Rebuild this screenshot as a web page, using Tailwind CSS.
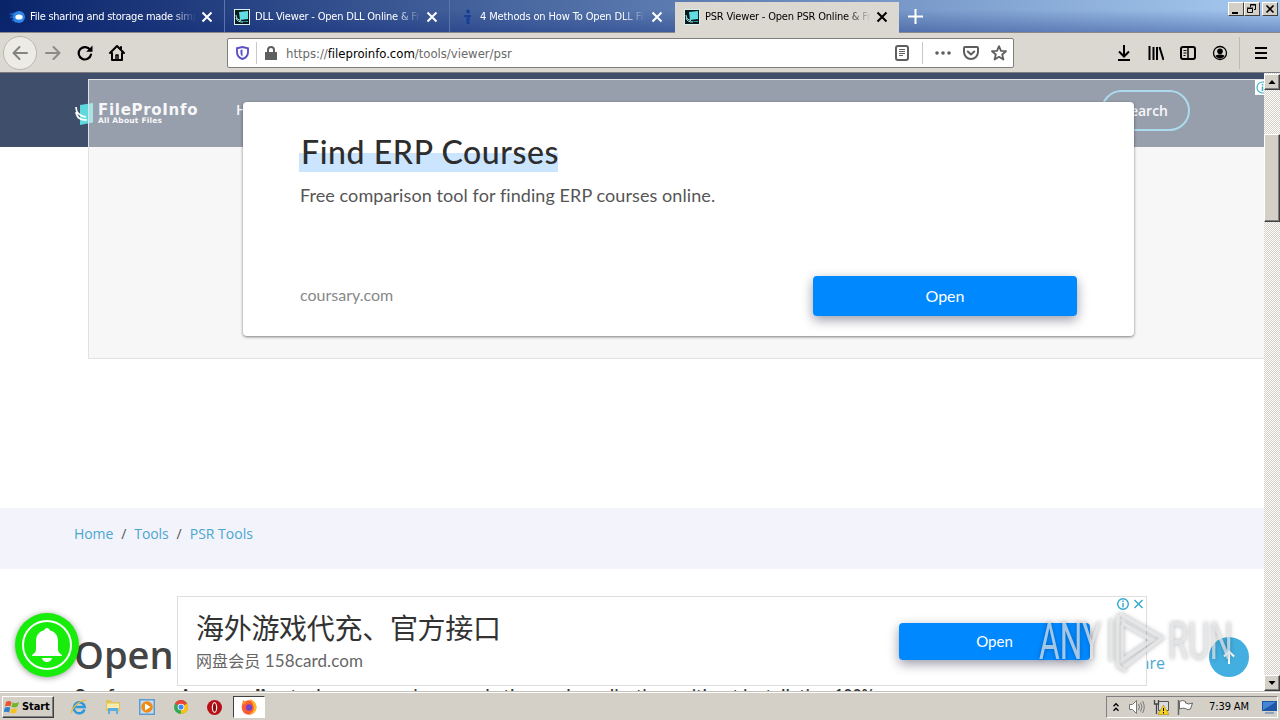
<!DOCTYPE html>
<html lang="en">
<head>
  <meta charset="UTF-8">
  <title>PSR Viewer - Open PSR Online &amp; Free</title>
  <meta name="viewport" content="width=device-width, initial-scale=1">
  <script src="https://cdn.jsdelivr.net/npm/@tailwindcss/browser@4"></script>
</head>

<body class="w-[1280px] h-[720px] overflow-hidden flex flex-col bg-white font-['DejaVu_Sans_Condensed','DejaVu_Sans',sans-serif] text-black">

  <svg class="hidden">
    <symbol id="close" viewBox="0 0 12 12"><path d="M1.500 1.500l9 9M10.500 1.500l-9 9" fill="none" stroke="currentColor" stroke-width="2"/></symbol>
    <symbol id="fpi" viewBox="0 0 16 16">
      <path d="M0 0h16v16H0z" fill="#d8f0f0"/><path d="M1 1h14v14H1z" fill="#0a1a1c"/>
      <path d="M5 3l9-1v8l-8 1z" fill="#62dbe2"/><path d="M2 6c0 3 2 5 5 5.500M2 9c1 3 3 4 7 4" fill="none" stroke="#a4f3f3" stroke-width="1"/>
      <path d="M8 12.500l6-.6V13H8z" fill="#37b6c0"/>
    </symbol>
  </svg>

  <!-- tab strip -->
  <header class="h-[33px] shrink-0 flex justify-between border-b border-[#8a8a8a] bg-[linear-gradient(to_bottom,transparent_30%,rgba(10,36,120,0.35)),linear-gradient(to_right,#0a246a,#a6caf0)]">
    <div class="flex text-white text-[11px]">
      <div class="w-[225px] h-8 flex items-center pt-[2px] pl-2 border-r border-[#5c74a8]">
        <svg class="size-[18px] shrink-0" viewBox="0 0 18 18"><path d="M1 6l7-2v11L3 12l3-1-5-2 4-1z" fill="#1761c0"/><circle cx="11" cy="9" r="6" fill="#2f86e8"/><ellipse cx="11" cy="9" rx="3.600" ry="2.600" fill="#fff"/></svg>
        <span class="ml-1 mt-px w-[166px] overflow-hidden whitespace-nowrap tracking-[-0.25px] mask-r-from-85%">File sharing and storage made simple</span>
        <svg class="size-3 ml-[5px] shrink-0"><use href="#close"/></svg>
      </div>
      <div class="w-[225px] h-8 flex items-center pt-[2px] pl-[9px] border-r border-[#5c74a8]">
        <svg class="size-4 shrink-0"><use href="#fpi"/></svg>
        <span class="ml-[5px] mt-px w-[166px] overflow-hidden whitespace-nowrap tracking-[-0.2px] mask-r-from-85%">DLL Viewer - Open DLL Online &amp; Free</span>
        <svg class="size-3 ml-[5px] shrink-0"><use href="#close"/></svg>
      </div>
      <div class="w-[225px] h-8 flex items-center pt-[2px] pl-[9px]">
        <svg class="size-4 shrink-0" viewBox="0 0 16 16"><circle cx="9" cy="2.500" r="2" fill="#173f93"/><path d="M5 6h7v2h-1.500v7h-3V8H5z" fill="#173f93"/></svg>
        <span class="ml-[5px] mt-px w-[166px] overflow-hidden whitespace-nowrap tracking-[-0.14px] mask-r-from-85%">4 Methods on How To Open DLL Files</span>
        <svg class="size-3 ml-[5px] shrink-0"><use href="#close"/></svg>
      </div>
      <div class="w-[224px] h-[31px] flex items-center pl-[9px] mt-0.5 pb-px bg-[#dbd8d1] text-black">
        <svg class="size-4 shrink-0"><use href="#fpi"/></svg>
        <span class="ml-[5px] mt-px w-[166px] overflow-hidden whitespace-nowrap tracking-[-0.2px] mask-r-from-85%">PSR Viewer - Open PSR Online &amp; Free</span>
        <svg class="size-3 ml-[5px] shrink-0"><use href="#close"/></svg>
      </div>
      <svg class="size-[15px] mt-[9px] ml-[9px]" viewBox="0 0 15 15"><path d="M7.500 0v15M0 7.500h15" stroke="#fff" stroke-width="2"/></svg>
    </div>
    <div class="flex mt-0.5 mr-0.5">
      <div class="w-4 h-[14px] bg-[#d4d0c8] border border-t-white border-l-white border-r-[#404040] border-b-[#404040]"><svg viewBox="0 0 14 12"><path d="M3 9h6v2H3z"/></svg></div>
      <div class="w-4 h-[14px] bg-[#d4d0c8] border border-t-white border-l-white border-r-[#404040] border-b-[#404040]"><svg viewBox="0 0 14 12" fill="none" stroke="#000"><path d="M5.500 4V1.500h5v5H9M5 2h6M2.500 5.500h5v4h-5zM2 5h6"/></svg></div>
      <div class="w-4 h-[14px] ml-0.5 bg-[#d4d0c8] border border-t-white border-l-white border-r-[#404040] border-b-[#404040]"><svg viewBox="0 0 14 12"><path d="M3.500 2.500l7 7M10.500 2.500l-7 7" stroke="#000" stroke-width="1.600"/></svg></div>
    </div>
  </header>

  <!-- toolbar -->
  <nav class="h-10 shrink-0 flex items-center bg-[#dbd8d1] border-b border-[#7c7c80]">
    <div class="size-[34px] ml-[3px] rounded-full bg-[#edebe6] border border-[#bab7b0] flex items-center justify-center text-[#858380]">
      <svg class="size-4" viewBox="0 0 16 16" fill="none" stroke="currentColor" stroke-width="2" stroke-linecap="round" stroke-linejoin="round"><path d="M15 8H1.500M7.500 2l-6 6 6 6"/></svg>
    </div>
    <svg class="size-4 ml-2 text-[#8c8a86]" viewBox="0 0 16 16" fill="none" stroke="currentColor" stroke-width="2" stroke-linecap="round" stroke-linejoin="round"><path d="M1 8h13.500M8.500 2l6 6-6 6"/></svg>
    <svg class="size-4 ml-4" viewBox="0 0 16 16"><path d="M13.200 5A6.200 6.200 0 1 0 14 9.500" fill="none" stroke="#000" stroke-width="2.200" stroke-linecap="round"/><path d="M15.500.5v6.300H9.200z"/></svg>
    <svg class="size-4 ml-4" viewBox="0 0 16 16" fill="none" stroke="#000" stroke-width="2" stroke-linejoin="round" stroke-linecap="round"><path d="M1 8l7-7 7 7M3 8v7h10V8M12 2v2"/><path d="M7 10h2v5H7z" stroke-width="1.500"/></svg>

    <div class="w-[787px] h-[30px] ml-[102px] flex items-center bg-white border border-[#807e79] rounded-[2px] text-[#6a6a6a]">
      <svg class="w-[13px] h-[14px] ml-2" viewBox="0 0 13 14"><path d="M1 2.200L6.500 1 12 2.200V6c0 4-2.500 6-5.500 7C3.500 12 1 10 1 6z" fill="none" stroke="#5b50c8" stroke-width="1.900"/><path d="M6.500 3.500L4.500 4v2.500c0 2 .5 3.300 2 4z" fill="#5b50c8"/></svg>
      <div class="w-px h-[22px] ml-[7px] bg-[#c8c8c8]"></div>
      <svg class="w-3 h-[14px] ml-2" viewBox="0 0 12 14"><path d="M0 6h12v8H0z" fill="#5e5e5e"/><path d="M3 7V4a3 3 0 0 1 6 0v3" fill="none" stroke="#5e5e5e" stroke-width="2"/></svg>
      <span class="ml-[9px] mt-0.5 text-[13px] tracking-[-0.02px] whitespace-nowrap">https://<span class="text-black">fileproinfo.com</span>/tools/viewer/psr</span>
      <div class="ml-auto flex items-center mr-[6px]">
        <svg class="w-[14px] h-4" viewBox="0 0 14 16"><rect x="1" y="1" width="12" height="14" rx="2" fill="none" stroke="#5e5e5e" stroke-width="2"/><path d="M4 4.500h6M4 6.500h6M4 8.500h6M4 10.500h4" stroke="#5e5e5e"/></svg>
        <div class="w-px h-[22px] ml-[13px] bg-[#c8c8c8]"></div>
        <svg class="w-4 h-4 ml-3" viewBox="0 0 16 16" fill="#5e5e5e"><circle cx="2" cy="8" r="1.800"/><circle cx="8" cy="8" r="1.800"/><circle cx="14" cy="8" r="1.800"/></svg>
        <svg class="w-4 h-4 ml-3" viewBox="0 0 16 16" fill="none" stroke="#5e5e5e" stroke-width="2" stroke-linecap="round" stroke-linejoin="round"><path d="M2 2h12q1 0 1 1v4a7 7 0 0 1-14 0V3q0-1 1-1z"/><path d="M4.800 6.500L8 9.500l3.200-3"/></svg>
        <svg class="w-4 h-4 ml-3" viewBox="0 0 16 16" fill="none" stroke="#5e5e5e" stroke-width="1.800" stroke-linejoin="round"><path d="M8 1.200l2 4.600 5 .4-3.800 3.300L12.400 14.500 8 11.800l-4.400 2.700 1.200-5L1 6.200l5-.4z"/></svg>
      </div>
    </div>

    <svg class="size-4 ml-[102px]" viewBox="0 0 16 16" fill="none" stroke="#000" stroke-width="2"><path d="M8 0v11M3 6.500l5 5 5-5M2 15h12"/></svg>
    <svg class="size-4 ml-4" viewBox="0 0 16 16" fill="none" stroke="#000" stroke-width="2"><path d="M1.500 1v14M5.500 2v13M9 2v13M11.500 2l4 13"/></svg>
    <svg class="size-4 ml-4" viewBox="0 0 16 16" fill="none" stroke="#000" stroke-width="2"><rect x="1" y="2" width="14" height="12" rx="2"/><path d="M8 2v12" stroke-width="1.500"/><path d="M3.500 5.500h3M3.500 8h3M3.500 10.500h2" stroke-width="1"/></svg>
    <svg class="size-4 ml-4" viewBox="0 0 16 16"><circle cx="8" cy="8" r="6.500" fill="none" stroke="#000" stroke-width="1.300"/><circle cx="8" cy="6.200" r="2.800"/><path d="M3.500 11c1-2 8-2 9 0-2 3.200-7 3.200-9 0z"/></svg>
    <div class="w-px h-8 ml-[11px] bg-[#bdbab4]"></div>
    <svg class="w-3 h-3 ml-[15px]" viewBox="0 0 12 12"><path d="M0 1h12M0 6h12M0 11h12" stroke="#000" stroke-width="2"/></svg>
  </nav>

  <div class="h-[618px] shrink-0 flex">
    <!-- page -->
    <main class="relative w-[1264px] h-full overflow-hidden bg-white font-['Open_Sans',sans-serif]">
      <div class="h-[74px] flex items-center pl-[75px] bg-[#3f4e6b] text-white">
        <svg class="w-[19px] h-[22px] mt-[7px]" viewBox="0 0 19 22"><path d="M5 2l13-2v19.500L5 22z" fill="#5fd9de"/><path d="M1 4c0 6 3 9 10 10M1 9c1 6 4 8 11 8" fill="none" stroke="#fff" stroke-width="1.700"/></svg>
        <div class="ml-1 mt-[7px] w-[100px] whitespace-nowrap font-['DejaVu_Sans',sans-serif]">
          <p class="text-[15px] leading-[14px] font-bold tracking-[0.7px]">FileProInfo</p>
          <p class="text-[7.5px] leading-[8px] font-bold tracking-[0.2px]">All About Files</p>
        </div>
        <span class="ml-[38px] text-sm font-semibold">Home</span>
        <span class="ml-auto mr-[74px] w-[89px] h-[41px] mt-px pr-[20px] flex items-center justify-end rounded-full border-2 border-[#69c6ea] text-sm font-semibold">Search</span>
      </div>

      <div class="h-[61px] mt-[361px] pt-4 pl-[74px] bg-[#f2f3fb] text-sm text-[#4aa7d0] leading-5">
        <a class="tracking-[-0.1px]">Home</a><span class="mx-2 text-[#555]">/</span><a class="tracking-[-0.1px]">Tools</a><span class="mx-2 text-[#555]">/</span><a>PSR Tools</a>
      </div>

      <div class="mt-[59px] px-[74px] flex justify-between">
        <h1 class="text-[38px] leading-[54px] font-semibold text-[#444] -mt-px">Open</h1>
        <a class="mt-[23px] mr-[25px] text-base text-[#4aa7d0] leading-6">Share</a>
      </div>
      <p class="mt-[2px] pl-[74px] text-base font-semibold text-[#333] whitespace-nowrap">Our free <b>psr viewer online</b> tool opens psr viewer and other such applications without installation 100%</p>

      <!-- top ad -->
      <aside class="absolute top-[6px] left-[88px] w-[1177px] h-[280px] flex justify-center bg-[#f0f0f0]/50 border border-[#dfe3e8] font-['Lato',sans-serif]">
        <div class="w-[891px] h-[234px] mt-[22px] ml-6 px-[57px] rounded bg-white shadow-[0_1px_3px_rgba(0,0,0,0.5)] flex flex-col">
          <div class="mt-[32px] -ml-px"><span class="inline-block w-[259px] h-[38px] pl-0.5 leading-[36px] text-[32px] font-medium tracking-[0.6px] whitespace-nowrap text-[#2d2d2d] bg-linear-to-b from-transparent from-50% to-[#cce5ff] to-50%">Find ERP Courses</span></div>
          <p class="mt-[11px] text-[18px] leading-6 tracking-[0.08px] text-[#555]">Free comparison tool for finding ERP courses online.</p>
          <div class="mt-[69px] flex items-center justify-between">
            <span class="-mt-0.5 text-base text-[#888]">coursary.com</span>
            <div class="w-[264px] h-10 rounded bg-[#0088ff] text-white text-base flex items-center justify-center shadow-[0_4px_12px_rgba(0,0,40,0.4)]">Open</div>
          </div>
        </div>
        <div class="absolute top-0 right-0 w-[9px] h-[15px] overflow-hidden bg-white"><svg class="size-[15px]" viewBox="0 0 15 15"><circle cx="7.500" cy="7.500" r="5.500" fill="none" stroke="#3bb4cb" stroke-width="1.200"/><path d="M7.500 4v1.500M7.500 6.500V11" stroke="#3bb4cb" stroke-width="1.500"/></svg></div>
      </aside>

      <!-- bottom ad -->
      <aside class="absolute top-[523px] left-[177px] w-[970px] h-[90px] pl-[18px] pr-14 flex justify-between items-center bg-white border border-[#dedede] font-['Lato','Noto_Sans_CJK_SC',sans-serif]">
        <div>
          <p class="text-[28px] leading-9 text-[#333] tracking-[-0.3px] font-['Noto_Sans_CJK_SC',sans-serif]">海外游戏代充、官方接口</p>
          <p class="mt-[3px] text-[17px] leading-6 text-[#666] tracking-[0.1px]"><span class="text-[16px] font-['Noto_Sans_CJK_SC',sans-serif]">网盘会员</span> 158card.com</p>
        </div>
        <div class="w-[191px] h-[37px] mt-[1px] rounded bg-[#0088ff] text-white text-[15px] flex items-center justify-center shadow-[0_4px_12px_rgba(0,0,40,0.4)]">Open</div>
        <svg class="absolute top-[1px] right-[1px] w-7 h-3" viewBox="0 0 28 12" fill="none" stroke="#2fa7cc" stroke-width="1.400"><circle cx="6" cy="6" r="5.300"/><path d="M6 2.500V4M6 5v4.500M17.500 2l8 8M25.500 2l-8 8"/></svg>
      </aside>

      <div class="absolute left-[15px] top-[540px] size-16 rounded-full bg-[#17ec0a] shadow-[0_1px_6px_rgba(0,0,0,0.4)]">
        <svg viewBox="0 0 64 64"><circle cx="32" cy="32" r="24" fill="none" stroke="#fff" stroke-width="2"/><path d="M32 15c1.600 0 2.500 1 2.700 2.200C40.500 18.500 43 23 43 28v8c0 3 1.500 4 4 6v1H17v-1c2.500-2 4-3 4-6v-8c0-5 2.500-9.500 8.300-10.800C29.500 16 30.400 15 32 15zM27 45h10c-.5 2.500-2.500 4-5 4s-4.500-1.500-5-4z" fill="#fff"/></svg>
      </div>
      <div class="absolute left-[1209px] top-[564px] size-10 rounded-full bg-[#42afe0]">
        <svg viewBox="0 0 40 40"><path d="M20 27V15M15 19.500l5-5 5 5" fill="none" stroke="#fff" stroke-width="2"/></svg>
      </div>

      <!-- watermark -->
      <svg class="absolute left-[1030px] top-[527px] w-[230px] h-[85px] font-['Roboto',sans-serif] drop-shadow-[0_0_2px_rgba(0,0,0,0.4)]" viewBox="0 0 230 85">
        <g fill="#e9ebee" fill-opacity=".7" font-size="51">
          <text x="9" y="59" textLength="62" lengthAdjust="spacingAndGlyphs">ANY</text>
          <text x="138" y="59" textLength="65" lengthAdjust="spacingAndGlyphs">RUN</text>
        </g>
        <path d="M81 19v42M88 15v51l8 5M92 25v35l30-20-30-17M90 14l42 24-38 29" fill="none" stroke="#e9ebee" stroke-opacity=".8" stroke-width="3.500"/>
      </svg>
    </main>

    <!-- scrollbar -->
    <div class="w-4 h-full flex flex-col bg-[repeating-conic-gradient(#fff_0_25%,#d4d0c8_0_50%)] bg-size-[2px_2px]">
      <div class="h-4 mt-px bg-[#d4d0c8] border border-t-white border-l-white border-r-[#404040] border-b-[#404040] shadow-[inset_-1px_-1px_#808080]"><svg viewBox="0 0 14 14"><path d="M3.500 9h7L7 5z"/></svg></div>
      <div class="h-[88px] mt-[44px] bg-[#d4d0c8] border border-t-white border-l-white border-r-[#404040] border-b-[#404040] shadow-[inset_-1px_-1px_#808080]"></div>
      <div class="h-4 mt-auto bg-[#d4d0c8] border border-t-white border-l-white border-r-[#404040] border-b-[#404040] shadow-[inset_-1px_-1px_#808080]"><svg viewBox="0 0 14 14"><path d="M3.500 5h7L7 9z"/></svg></div>
    </div>
  </div>

  <!-- taskbar -->
  <footer class="h-[29px] shrink-0 flex items-center justify-between px-0.5 pt-0.5 bg-[#d4d0c8] border-t border-[#c4c1ba] shadow-[inset_0_1px_#fff]">
    <div class="flex items-center">
      <div class="w-[52px] h-[22px] flex items-center pl-px bg-[#d4d0c8] border border-t-white border-l-white border-r-[#404040] border-b-[#404040] shadow-[inset_-1px_-1px_#808080]">
        <svg class="size-4" viewBox="0 0 16 16"><path d="M2 3q3-2 5.500 0L6.500 7.500Q4 6 1 7.500z" fill="#e8562a"/><path d="M8.500 3.500q3 1.500 6.500-.5L13.500 7.500q-3 1.500-6 .5z" fill="#72b52c"/><path d="M.8 8.800q3-1.500 5.500 0L5 13.500Q2.500 12-.2 13.200z" fill="#2f7fd0"/><path d="M7.200 9.300q3 1.500 6-.5L12 13.500q-3 1.500-6 .4z" fill="#f7c21c"/></svg>
        <span class="ml-0.5 text-[11px] font-bold tracking-[-0.1px]">Start</span>
      </div>
      <svg class="size-4 ml-[17px]" viewBox="0 0 16 16"><path d="M13.500 10.500A5.500 5.500 0 1 1 13.700 8H4" fill="none" stroke="#2f98dc" stroke-width="2.500"/><path d="M1 14C-1 10 10 0 15 1.500" fill="none" stroke="#e9bd3b" stroke-width="1.300"/></svg>
      <svg class="size-4 ml-[18px]" viewBox="0 0 16 16"><path d="M1 1h5l1 2h8v9H1z" fill="#e2c25c"/><path d="M2 4.500h12v5H2z" fill="#f9ecad"/><path d="M3 9h10v6h-2v-3H5v3H3z" fill="#58aee0"/></svg>
      <svg class="size-4 ml-[18px]" viewBox="0 0 16 16"><path d="M0 0h16v16H0z" fill="#5e9bd2"/><path d="M1.500 1.500h13v13h-13z" fill="#c5dff2"/><circle cx="8" cy="8" r="5.800" fill="#f08a15"/><path d="M6 4.500L11.500 8 6 11.500z" fill="#fff"/></svg>
      <svg class="size-[14px] ml-[19px]" viewBox="0 0 16 16"><circle cx="8" cy="8" r="8" fill="#35a853"/><path d="M8 8L1 4A8 8 0 0 1 15 4z" fill="#e84335"/><path d="M8 8l7.200-4A8 8 0 0 1 8 16z" fill="#fbc016"/><circle cx="8" cy="8" r="3.800" fill="#fff"/><circle cx="8" cy="8" r="2.900" fill="#4286f5"/></svg>
      <svg class="size-[15px] ml-[19px]" viewBox="0 0 16 16"><circle cx="8" cy="8" r="8" fill="#b80f16"/><ellipse cx="8" cy="8" rx="2.900" ry="5.800" fill="#f4eeee"/><ellipse cx="8" cy="8" rx="1.600" ry="4.600" fill="#8d0a10"/></svg>
      <div class="w-8 h-[22px] ml-[11px] flex items-center justify-center bg-white border border-t-[#404040] border-l-[#404040] border-r-white border-b-white">
        <svg class="size-4" viewBox="0 0 16 16"><circle cx="8" cy="8.500" r="7.300" fill="#fd5b30"/><path d="M9 0c5 2 6.500 5 6.500 8.500 0 4-3 6.500-7 6.500 3-2 5-4 4-8C12 4 10 3 9 0z" fill="#ffb526"/><path d="M1 6l1-5 4 3z" fill="#ff8c23"/><circle cx="8" cy="8.500" r="3.200" fill="#7444c8"/></svg>
      </div>
    </div>
    <div class="w-[172px] h-[22px] flex items-center bg-[#d4d0c8] border border-t-[#808080] border-l-[#808080] border-r-white border-b-white text-[11px]">
      <svg class="w-2 h-[10px] ml-[5px]" viewBox="0 0 8 10" fill="none" stroke="#000" stroke-width="1.300"><path d="M1.500 4.200L4 1.700l2.500 2.500M1.500 8.700L4 6.200l2.500 2.500"/></svg>
      <svg class="w-4 h-[14px] ml-[9px]" viewBox="0 0 16 14" fill="none" stroke="#777"><path d="M.5 4.500h3l4-4v13l-4-4h-3z" fill="#fff"/><path d="M9.500 4q2 3 0 6M11.500 2.500q3 4.500 0 9M13.500 1q3.500 6 0 12"/></svg>
      <svg class="size-4 ml-2" viewBox="0 0 16 16"><path d="M5.500 2.500h10v9h-10z" fill="#d9dde2" stroke="#555"/><path d="M1.500 1v4h4V1M3.500 5v10" fill="none" stroke="#444" stroke-width="1.300"/><path d="M10.500 6L16 15.500H5z" fill="#f8d51c" stroke="#b18b00" stroke-width=".6"/><path d="M10.500 9v3M10.500 13v1.500" stroke="#000"/></svg>
      <svg class="size-4 ml-2" viewBox="0 0 16 16"><path d="M2.500 2.500q3-2 6 0V4q3 2 7 0l-2 6q-3 1.500-5-.5-3-1-6 .5z" fill="#fff" stroke="#666"/><path d="M1.500 1v15" stroke="#666" stroke-width="1.500"/></svg>
      <span class="ml-4 mt-px tracking-[-0.1px] whitespace-nowrap">7:39 AM</span>
      <svg class="w-[15px] h-[13px] ml-auto" viewBox="0 0 15 13"><path d="M0 0h15v10H0z" fill="#1e56a8"/><path d="M1 1h13L1 9z" fill="#4387d2"/><path d="M3 11h9v2H3z" fill="#8aa2bd"/></svg>
    </div>
  </footer>
</body>
</html>
